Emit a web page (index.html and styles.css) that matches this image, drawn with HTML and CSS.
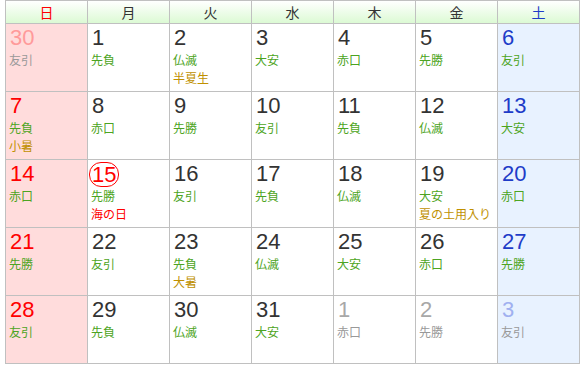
FILE: index.html
```html
<!DOCTYPE html>
<html lang="ja">
<head>
<meta charset="utf-8">
<link rel="stylesheet" href="styles.css">
</head>
<body>
<div class="cal">
  <div class="hd sun">日</div>
  <div class="hd">月</div>
  <div class="hd">火</div>
  <div class="hd">水</div>
  <div class="hd">木</div>
  <div class="hd">金</div>
  <div class="hd sat">土</div>

  <div class="c sun other"><div class="n">30</div><div class="r">友引</div></div>
  <div class="c"><div class="n">1</div><div class="r">先負</div></div>
  <div class="c"><div class="n">2</div><div class="r">仏滅</div><div class="s">半夏生</div></div>
  <div class="c"><div class="n">3</div><div class="r">大安</div></div>
  <div class="c"><div class="n">4</div><div class="r">赤口</div></div>
  <div class="c"><div class="n">5</div><div class="r">先勝</div></div>
  <div class="c sat"><div class="n">6</div><div class="r">友引</div></div>

  <div class="c sun"><div class="n">7</div><div class="r">先負</div><div class="s">小暑</div></div>
  <div class="c"><div class="n">8</div><div class="r">赤口</div></div>
  <div class="c"><div class="n">9</div><div class="r">先勝</div></div>
  <div class="c"><div class="n">10</div><div class="r">友引</div></div>
  <div class="c"><div class="n">11</div><div class="r">先負</div></div>
  <div class="c"><div class="n">12</div><div class="r">仏滅</div></div>
  <div class="c sat"><div class="n">13</div><div class="r">大安</div></div>

  <div class="c sun"><div class="n">14</div><div class="r">赤口</div></div>
  <div class="c hol"><div class="n"><span class="today">15</span></div><div class="r">先勝</div><div class="h">海の日</div></div>
  <div class="c"><div class="n">16</div><div class="r">友引</div></div>
  <div class="c"><div class="n">17</div><div class="r">先負</div></div>
  <div class="c"><div class="n">18</div><div class="r">仏滅</div></div>
  <div class="c"><div class="n">19</div><div class="r">大安</div><div class="s">夏の土用入り</div></div>
  <div class="c sat"><div class="n">20</div><div class="r">赤口</div></div>

  <div class="c sun"><div class="n">21</div><div class="r">先勝</div></div>
  <div class="c"><div class="n">22</div><div class="r">友引</div></div>
  <div class="c"><div class="n">23</div><div class="r">先負</div><div class="s">大暑</div></div>
  <div class="c"><div class="n">24</div><div class="r">仏滅</div></div>
  <div class="c"><div class="n">25</div><div class="r">大安</div></div>
  <div class="c"><div class="n">26</div><div class="r">赤口</div></div>
  <div class="c sat"><div class="n">27</div><div class="r">先勝</div></div>

  <div class="c sun"><div class="n">28</div><div class="r">友引</div></div>
  <div class="c"><div class="n">29</div><div class="r">先負</div></div>
  <div class="c"><div class="n">30</div><div class="r">仏滅</div></div>
  <div class="c"><div class="n">31</div><div class="r">大安</div></div>
  <div class="c other"><div class="n">1</div><div class="r">赤口</div></div>
  <div class="c other"><div class="n">2</div><div class="r">先勝</div></div>
  <div class="c sat other"><div class="n">3</div><div class="r">友引</div></div>
</div>
</body>
</html>
```

FILE: styles.css
```css
html, body {
  margin: 0;
  padding: 0;
  background: #ffffff;
}
body {
  padding-left: 5px;
  font-family: "Liberation Sans", "Noto Sans CJK JP", sans-serif;
}
.cal {
  display: grid;
  grid-template-columns: repeat(7, 81px);
  grid-template-rows: 22px repeat(5, 67px);
  gap: 1px;
  padding: 1px;
  background: #c0c0c0;
  width: max-content;
}
.hd {
  background: linear-gradient(to bottom, #ffffff 0%, #dcfad4 100%);
  color: #333333;
  font-family: "Noto Sans CJK JP", sans-serif;
  font-size: 14px;
  line-height: 22px;
  text-align: center;
}
.hd.sun { color: #ff0000; }
.hd.sat { color: #1e3cc8; }
.c {
  background: #ffffff;
  padding: 1px 0 0 4px;
}
.c.sun { background: #ffdcdc; }
.c.sat { background: #e8f2ff; }
.n {
  font-family: "Liberation Sans", sans-serif;
  font-size: 22px;
  line-height: 26px;
  color: #333333;
  height: 26px;
}
.c.sun .n { color: #ff0000; }
.c.sat .n { color: #1e3cc8; }
.r, .s, .h {
  font-family: "Noto Sans CJK JP", sans-serif;
  font-size: 12px;
  line-height: 17.5px;
  margin-left: -1px;
}
.r { color: #4ca422; }
.s { color: #c09000; }
.h { color: #ff0000; }
.c.other .n { color: #a8a8a8; }
.c.other .r { color: #999999; }
.c.sun.other .n { color: #ff9a9a; }
.c.sat.other .n { color: #a0b0f0; }
.today {
  display: inline-block;
  vertical-align: top;
  border: 1px solid #ff0000;
  border-radius: 12px;
  padding: 0 2px;
  margin: 1px 0 0 -3px;
  line-height: 23px;
}
.c.hol .n { color: #ff0000; }
```
